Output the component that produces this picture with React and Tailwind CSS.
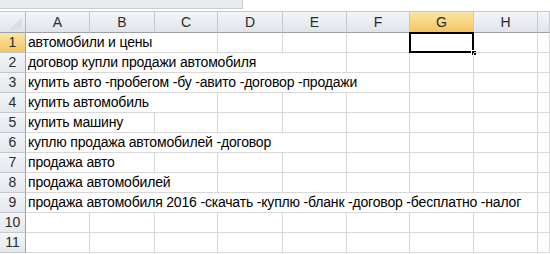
import React from "react";

const rows = [
  { t: "автомобили и цены", span: 3 },
  { t: "договор купли продажи автомобиля", span: 5 },
  { t: "купить авто -пробегом -бу -авито -договор -продажи", span: 6 },
  { t: "купить автомобиль", span: 3 },
  { t: "купить машину", span: 2 },
  { t: "куплю продажа автомобилей -договор", span: 5 },
  { t: "продажа авто", span: 2 },
  { t: "продажа автомобилей", span: 3 },
  { t: "продажа автомобиля 2016 -скачать -куплю -бланк -договор -бесплатно -налог", span: 8 },
  { t: "", span: 1 },
  { t: "", span: 1 },
];

const cols = ["A", "B", "C", "D", "E", "F", "G", "H", ""];

const spanClass = {
  1: "col-span-1",
  2: "col-span-2",
  3: "col-span-3",
  5: "col-span-5",
  6: "col-span-6",
  8: "col-span-8",
};

export default function App() {
  return (
    <div
      className="w-[550px] h-[254px] overflow-hidden bg-white text-[#000]"
      style={{ fontFamily: '"Liberation Sans", Arial, sans-serif' }}
    >
      <div className="h-[11px] relative bg-white">
        <div className="w-[243px] h-[9px] bg-[#e9ebee] border-r border-b border-[#c9ccd1]"></div>
      </div>
      <div className="grid grid-cols-[26px_64px_65px_63px_65px_64px_63px_64px_64px_1fr] relative">
        <div className="h-[22px] border-t border-b border-r border-t-[#c5c9cf] border-b-[#9c9fa3] border-r-[#b5b9bf] bg-gradient-to-b from-[#f3f5f8] to-[#e0e4ea] relative">
          <svg className="absolute right-[3px] bottom-[3px]" width="12" height="12" viewBox="0 0 12 12">
            <polygon points="12,0 12,12 0,12" fill="#dadde2" />
          </svg>
        </div>
        {cols.map((c, i) => (
          <div
            key={i}
            className={
              "h-[22px] border-t border-b border-r border-t-[#c5c9cf] border-b-[#9c9fa3] border-r-[#c5c9cf] flex items-center justify-center text-[14px] text-[#2b2b2b] " +
              (c === "G"
                ? "bg-gradient-to-b from-[#fbe6a2] to-[#f3c563]"
                : "bg-gradient-to-b from-[#f3f5f8] to-[#e0e4ea]")
            }
          >
            {c}
          </div>
        ))}
        {rows.map((r, ri) => {
          const cells = [];
          cells.push(
            <div
              key={"h" + ri}
              className={
                "h-[20px] border-b border-r border-b-[#c5c9cf] border-r-[#9c9fa3] flex items-center justify-center text-[14px] text-[#2b2b2b] " +
                (ri === 0
                  ? "bg-gradient-to-b from-[#fbe6a2] to-[#f3c563]"
                  : "bg-gradient-to-b from-[#f3f5f8] to-[#e4e8ed]")
              }
            >
              {ri + 1}
            </div>
          );
          cells.push(
            <div
              key={"t" + ri}
              className={
                "h-[20px] border-b border-r border-[#d8d8d8] flex items-center pl-[2px] whitespace-nowrap text-[14px] tracking-[-0.18px] " +
                spanClass[r.span]
              }
            >
              {r.t}
            </div>
          );
          for (let k = r.span; k < 9; k++) {
            cells.push(
              <div
                key={"c" + ri + "-" + k}
                className="h-[20px] border-b border-r border-[#d8d8d8] relative"
              >
                {ri === 0 && k === 6 && (
                  <>
                    <div className="absolute left-[-1px] top-[-1px] right-[-1px] bottom-[-1px] border-2 border-black"></div>
                    <div className="absolute right-[-4px] bottom-[-4px] w-[6px] h-[6px] bg-black border border-white"></div>
                  </>
                )}
              </div>
            );
          }
          return cells;
        })}
      </div>
    </div>
  );
}
